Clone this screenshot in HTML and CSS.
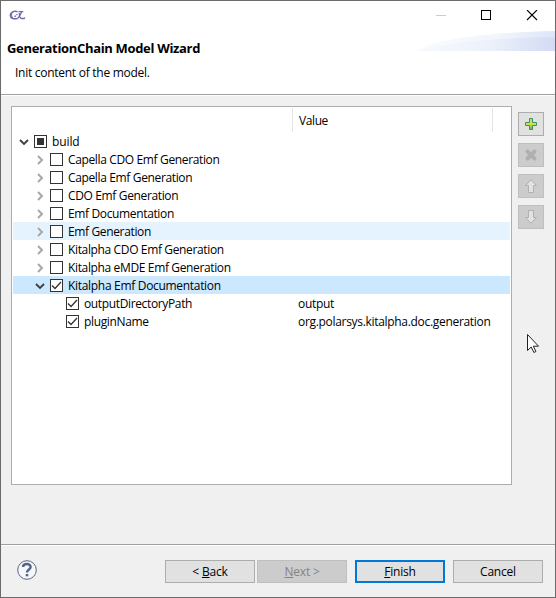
FILE: index.html
```html
<!DOCTYPE html>
<html lang="en">
<head>
<meta charset="utf-8">
<title>GenerationChain Model Wizard</title>
<link rel="stylesheet" href="styles.css">
</head>
<body>
<div class="window">
  <header class="header">
    <div class="titlebar">
      <svg class="logo" width="18" height="12" viewBox="0 0 18 12" fill="none" stroke="#7668a8">
        <path d="M8.500 1.700C5 .6 1.300 2 1.300 5.200S4.500 9.300 8.500 8.600" stroke-width="1.500"/>
        <path d="M3.300 2.200C2.300 4 2.500 7 4 8.500" stroke-width="1.200"/>
        <path d="M5.500 6.200h1.400M7.300 4.600h1.200" stroke-width="1.400"/>
        <path d="M9.500 1.700h4.800M12.800 1.700C11.500 4 11 6.500 8.500 8.600M10.200 3c.2 3 .8 5.400 2.400 5.500h2.600l.6-1" stroke-width="1.300"/>
      </svg>
      <svg class="controls" width="104" height="12" viewBox="0 0 104 12" fill="none" shape-rendering="crispEdges">
        <path d="M0 5.500h10" stroke="#ccc"/>
        <path d="M45.500.5h9v9h-9z" stroke="#000"/>
        <path d="M91 0l10 10M101 0l-10 10" stroke="#000" stroke-width="1.100" shape-rendering="auto"/>
      </svg>
    </div>
    <svg class="swoosh" width="141" height="21" viewBox="0 0 141 21">
      <defs>
        <linearGradient id="g1"><stop offset="0" stop-color="#fafcfe"/><stop offset=".6" stop-color="#f1f5fc"/><stop offset="1" stop-color="#dde6f7"/></linearGradient>
        <linearGradient id="g2"><stop offset="0" stop-color="#f7fafd"/><stop offset=".5" stop-color="#edf2fa"/><stop offset="1" stop-color="#d2dbf4"/></linearGradient>
      </defs>
      <path d="M0 20C20 8 80 1 141 0v20z" fill="url(#g1)"/>
      <path d="M4 20C30 12 75 7 141 6v14z" fill="url(#g2)"/>
    </svg>
    <h1>GenerationChain Model Wizard</h1>
    <p>Init content of the model.</p>
  </header>
  <main class="content">
    <section class="tree">
      <div class="columns"><span class="name"></span><span class="value">Value</span></div>
      <div class="row l0"><svg class="arrow"><use href="#down"/></svg><i class="check mixed"></i><span class="label">build</span></div>
      <div class="row l1"><svg class="arrow"><use href="#right"/></svg><i class="check"></i><span class="label">Capella CDO Emf Generation</span></div>
      <div class="row l1"><svg class="arrow"><use href="#right"/></svg><i class="check"></i><span class="label">Capella Emf Generation</span></div>
      <div class="row l1"><svg class="arrow"><use href="#right"/></svg><i class="check"></i><span class="label">CDO Emf Generation</span></div>
      <div class="row l1"><svg class="arrow"><use href="#right"/></svg><i class="check"></i><span class="label">Emf Documentation</span></div>
      <div class="row l1 hover"><svg class="arrow"><use href="#right"/></svg><i class="check"></i><span class="label">Emf Generation</span></div>
      <div class="row l1"><svg class="arrow"><use href="#right"/></svg><i class="check"></i><span class="label">Kitalpha CDO Emf Generation</span></div>
      <div class="row l1"><svg class="arrow"><use href="#right"/></svg><i class="check"></i><span class="label">Kitalpha eMDE Emf Generation</span></div>
      <div class="row l1 selected"><svg class="arrow"><use href="#down"/></svg><i class="check"><svg><use href="#tick"/></svg></i><span class="label">Kitalpha Emf Documentation</span></div>
      <div class="row l2"><i class="check"><svg><use href="#tick"/></svg></i><span class="label">outputDirectoryPath</span><span class="cell">output</span></div>
      <div class="row l2"><i class="check"><svg><use href="#tick"/></svg></i><span class="label">pluginName</span><span class="cell">org.polarsys.kitalpha.doc.generation</span></div>
    </section>
    <aside class="tools">
      <button><svg width="14" height="14" viewBox="0 0 14 14"><defs><linearGradient id="green" x2="0" y2="1"><stop offset="0" stop-color="#b5dc83"/><stop offset=".5" stop-color="#d5e34c"/><stop offset="1" stop-color="#68aa3c"/></linearGradient></defs><path d="M5.500 1.500h3v4h4v3h-4v4h-3v-4h-4v-3h4z" fill="url(#green)" stroke="#3d9062"/></svg></button>
      <button disabled><svg width="14" height="14" viewBox="0 0 14 14"><path d="M3.500 3.500l7 7M10.500 3.500l-7 7" stroke="#b0b0b0" stroke-width="4" stroke-linecap="round"/></svg></button>
      <button disabled><svg width="14" height="14" viewBox="0 0 14 14"><path d="M7 .8l5.500 5.700H9.500v7h-5v-7h-3z" fill="#e2e2e2" stroke="#b1b1b1"/></svg></button>
      <button disabled><svg width="14" height="14" viewBox="0 0 14 14"><path d="M7 13.200l5.500-5.700H9.500v-7h-5v7h-3z" fill="#e2e2e2" stroke="#b1b1b1"/></svg></button>
    </aside>
  </main>
  <footer class="footer">
    <svg class="help" width="20" height="20" viewBox="0 0 20 20" fill="none" stroke="#536789"><circle cx="10" cy="10" r="9.300" fill="#f7f7f7"/><path d="M6 7C6.300 3 13.600 3 13.600 7c0 2.500-3.600 2.500-3.600 5.500" stroke-width="2.500"/><path d="M10 14v2.300" stroke-width="2.600"/></svg>
    <button><span>&lt; <u>B</u>ack</span></button>
    <button disabled><span><u>N</u>ext &gt;</span></button>
    <button class="primary"><span><u>F</u>inish</span></button>
    <button class="cancel"><span>Cancel</span></button>
  </footer>
  <svg class="cursor" width="13" height="20" viewBox="0 0 13 20"><path d="M.5.5v16l3.700-3.500 2.700 5.500 2-1-2.600-5.300h5.200z" fill="#fff" stroke="#222"/></svg>
</div>
<svg class="symbols">
  <symbol id="down" viewBox="0 0 10 10"><path d="M1 3l4 4 4-4" fill="none" stroke="#404040" stroke-width="1.900"/></symbol>
  <symbol id="right" viewBox="0 0 10 10"><path d="M3 1l4 4-4 4" fill="none" stroke="#a6a6a6" stroke-width="1.900"/></symbol>
  <symbol id="tick" viewBox="0 0 11 11"><path d="M1 5.500l3 3 6-6.500" fill="none" stroke="#333" stroke-width="1.300"/></symbol>
</svg>
</body>
</html>
```
FILE: styles.css
```css
* { box-sizing: border-box; }
body { margin: 0; font: 12px/18px "Open Sans", "Noto Sans", sans-serif; color: #000; }
.window { position: relative; width: 556px; height: 598px; border: 1px solid #6b6b6b; background: #f0f0f0; display: flex; flex-direction: column; }
.header { position: relative; height: 95px; background: #fff; border-bottom: 1px solid #fff; box-shadow: inset 0 -1px #a0a0a0; }
.titlebar { height: 29px; display: flex; justify-content: space-between; padding: 9px 15px 0 8px; }
.swoosh { position: absolute; right: 0; top: 30px; }
h1, p { margin: 0; white-space: nowrap; }
h1 { font-size: 13px; line-height: 18px; padding: 9px 0 0 6px; letter-spacing: -.33px; }
p { padding: 7px 0 0 14px; letter-spacing: -.27px; }
.content { display: flex; gap: 6px; height: 449px; padding: 10px 0 0 10px; }
.tree { width: 501px; height: 379px; padding: 1px; border: 1px solid #abadb3; background: #fff; }
.columns { display: flex; height: 24px; line-height: 24px; letter-spacing: -.4px; }
.name { width: 280px; border-right: 1px solid #e5e5e5; }
.value { width: 200px; padding: 1px 0 0 6px; border-right: 1px solid #e5e5e5; }
.row { display: flex; align-items: center; height: 18px; white-space: nowrap; letter-spacing: -.36px; }
.l0 { padding-left: 6px; letter-spacing: -.1px; }
.l1 { padding-left: 22px; }
.l2 { padding-left: 53px; }
.hover { background: #e5f3ff; }
.selected { background: #cce8ff; letter-spacing: -.31px; }
.arrow { width: 10px; height: 10px; margin: 2px 5px 0 0; }
.check { display: block; width: 13px; height: 13px; border: 1px solid #333; background: #fff; margin-top: 1px; }
.check svg { display: block; width: 11px; height: 11px; }
.mixed { background: #333; border: 1px solid #333; box-shadow: inset 0 0 0 2px #fff; }
.label { margin: 1px 0 -1px 5px; }
.cell { margin: 1px 0 -1px; letter-spacing: -.31px; }
.l2 .label { width: 214px; }
.tools { display: flex; flex-direction: column; gap: 7px; padding-top: 6px; }
button { display: flex; align-items: center; justify-content: center; padding: 0; border: 1px solid #adadad; border-radius: 0; background: #e1e1e1; color: #000; font: inherit; letter-spacing: -.2px; }
button:disabled { border-color: #bfbfbf; background: #ccc; color: #838383; }
.tools button { width: 26px; height: 24px; }
.footer { flex: 1; display: flex; align-items: flex-start; padding: 14px 12px 0 16px; gap: 2px; border-top: 1px solid #fff; box-shadow: 0 -1px #a0a0a0; }
.help { margin-right: auto; }
.footer button { width: 90px; height: 23px; }
.footer .primary { margin-left: 6px; border: 2px solid #0078d7; }
.footer .cancel { margin-left: 6px; }
.cursor { position: absolute; left: 526px; top: 333px; }
.symbols { position: absolute; width: 0; height: 0; }
```
